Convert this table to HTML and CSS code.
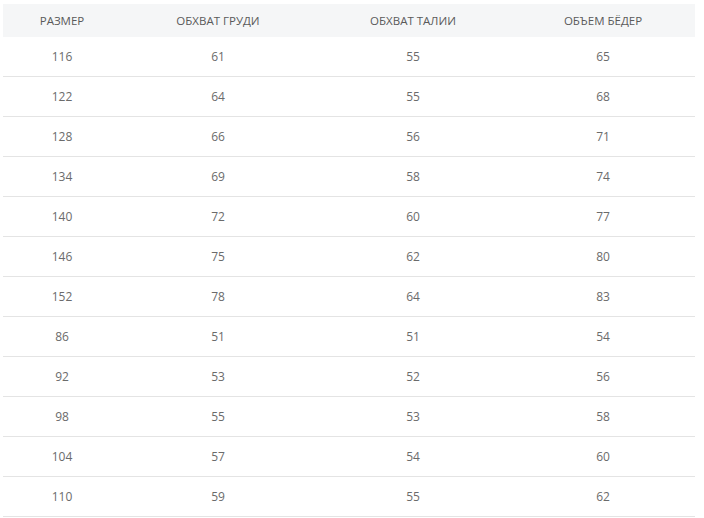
FILE: index.html
```html
<!DOCTYPE html>
<html lang="ru">
<head>
<meta charset="utf-8">
<link rel="stylesheet" href="styles.css">
</head>
<body>
<table class="sizes">
  <colgroup>
    <col class="c1"><col class="c2"><col class="c3"><col class="c4">
  </colgroup>
  <thead>
    <tr><th>РАЗМЕР</th><th>ОБХВАТ ГРУДИ</th><th>ОБХВАТ ТАЛИИ</th><th>ОБЪЕМ БЁДЕР</th></tr>
  </thead>
  <tbody>
    <tr><td>116</td><td>61</td><td>55</td><td>65</td></tr>
    <tr><td>122</td><td>64</td><td>55</td><td>68</td></tr>
    <tr><td>128</td><td>66</td><td>56</td><td>71</td></tr>
    <tr><td>134</td><td>69</td><td>58</td><td>74</td></tr>
    <tr><td>140</td><td>72</td><td>60</td><td>77</td></tr>
    <tr><td>146</td><td>75</td><td>62</td><td>80</td></tr>
    <tr><td>152</td><td>78</td><td>64</td><td>83</td></tr>
    <tr><td>86</td><td>51</td><td>51</td><td>54</td></tr>
    <tr><td>92</td><td>53</td><td>52</td><td>56</td></tr>
    <tr><td>98</td><td>55</td><td>53</td><td>58</td></tr>
    <tr><td>104</td><td>57</td><td>54</td><td>60</td></tr>
    <tr><td>110</td><td>59</td><td>55</td><td>62</td></tr>
  </tbody>
</table>
</body>
</html>
```
FILE: styles.css
```css
html, body {
  margin: 0;
  padding: 0;
  background: #fff;
}
body {
  padding: 4px 0 0 3px;
  font-family: "Open Sans", "Noto Sans", sans-serif;
  font-size: 12px;
  color: #6b6b6b;
}
.sizes {
  border-collapse: collapse;
  table-layout: fixed;
  width: 692px;
}
.c1 { width: 118px; }
.c2 { width: 194px; }
.c3 { width: 196px; }
.c4 { width: 184px; }
.sizes th {
  height: 33px;
  padding: 0;
  background: #f5f6f7;
  font-weight: 400;
  font-size: 11.5px;
  color: #5a5a5a;
  text-align: center;
  vertical-align: middle;
}
.sizes td {
  height: 39px;
  padding: 0;
  text-align: center;
  vertical-align: middle;
  border-bottom: 1px solid #e4e4e4;
  color: #6b6b6b;
}
```
